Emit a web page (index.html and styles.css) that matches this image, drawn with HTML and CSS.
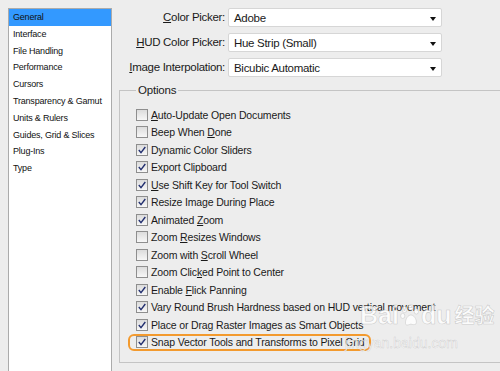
FILE: index.html
```html
<!DOCTYPE html>
<html lang="en">
<head>
    <meta charset="UTF-8">
    <title>Preferences - General</title>
    <link rel="stylesheet" href="styles.css">
</head>
<body>

    <div class="dialog">
        <ul class="nav">
            <li class="active">General</li>
            <li>Interface</li>
            <li>File Handling</li>
            <li>Performance</li>
            <li>Cursors</li>
            <li>Transparency &amp; Gamut</li>
            <li>Units &amp; Rulers</li>
            <li>Guides, Grid &amp; Slices</li>
            <li>Plug-Ins</li>
            <li>Type</li>
        </ul>

        <div class="panel">
            <div class="pickers">
                <label><u>C</u>olor Picker:</label>
                <div class="select">Adobe<span class="arrow"></span></div>
                <label><u>H</u>UD Color Picker:</label>
                <div class="select">Hue Strip (Small)<span class="arrow"></span></div>
                <label><u>I</u>mage Interpolation:</label>
                <div class="select">Bicubic Automatic<span class="arrow"></span></div>
            </div>

            <fieldset class="options">
                <legend>Options</legend>
                <ul class="checks">
                    <li class="check"><span class="box"></span><span><u>A</u>uto-Update Open Documents</span></li>
                    <li class="check"><span class="box"></span><span>Beep When <u>D</u>one</span></li>
                    <li class="check on"><span class="box"></span><span>Dynamic Color Sliders</span></li>
                    <li class="check on"><span class="box"></span><span>Export Clipboard</span></li>
                    <li class="check on"><span class="box"></span><span><u>U</u>se Shift Key for Tool Switch</span></li>
                    <li class="check on"><span class="box"></span><span>Resize Image During Place</span></li>
                    <li class="check on"><span class="box"></span><span>Animated <u>Z</u>oom</span></li>
                    <li class="check"><span class="box"></span><span>Zoom <u>R</u>esizes Windows</span></li>
                    <li class="check"><span class="box"></span><span>Zoom with <u>S</u>croll Wheel</span></li>
                    <li class="check"><span class="box"></span><span>Zoom Clic<u>k</u>ed Point to Center</span></li>
                    <li class="check on"><span class="box"></span><span>Enable <u>F</u>lick Panning</span></li>
                    <li class="check on"><span class="box"></span><span>Vary Round Brush Hardness based on HUD vertical movement</span></li>
                    <li class="check on"><span class="box"></span><span>Place or Drag Raster Images as Smart Objects</span></li>
                    <li class="check on marked"><span class="box"></span><span>Snap Vector Tools and Transforms to Pixel Grid</span></li>
                </ul>
            </fieldset>
        </div>
    </div>

    <!-- watermark from the original screenshot -->
    <div class="watermark">
        <div class="logo">Bai<svg width="20" height="22" viewBox="0 0 22 24"><ellipse cx="5" cy="6" rx="2.6" ry="3.4"/><ellipse cx="12" cy="3.5" rx="2.6" ry="3.2"/><ellipse cx="18" cy="8" rx="2.4" ry="3"/><ellipse cx="3" cy="13" rx="2.3" ry="2.8"/><path d="M6 21c0-5 3-9 6-9s6 4 6 8c0 3-3 3-6 2c-3 1-6 2-6-1z"/></svg>du<span class="cn">经验</span></div>
        <div class="url">jingyan.baidu.com</div>
    </div>

</body>
</html>
```

FILE: styles.css
```css
body {
    margin: 0;
    background: #ededed;
    font-family: 'Liberation Sans', Arial, sans-serif;
    font-size: 11px;
    color: #1a1a1a;
    overflow: hidden;
}

.dialog {
    display: flex;
    height: 371px;
}

/* left category list */
.nav {
    list-style: none;
    margin: 8px 0 0 8px;
    padding: 0;
    width: 102px;
    flex: none;
    background: #fff;
    border: 1px solid #ababab;
    border-bottom: none;
}

.nav li {
    height: 16.8px;
    line-height: 16.8px;
    padding-left: 4px;
    font-size: 9px;
    letter-spacing: -0.2px;
    color: #111;
}

.nav li.active {
    background: #3399ff;
}

.panel {
    flex: 1;
    min-width: 0;
    padding-left: 7px;
    display: flex;
    flex-direction: column;
}

/* color picker rows */
.pickers {
    display: grid;
    grid-template-columns: 106px 214px;
    column-gap: 3px;
    row-gap: 6px;
    padding-top: 8px;
}

.pickers label {
    text-align: right;
    line-height: 19px;
    font-size: 11.5px;
    letter-spacing: -0.3px;
    white-space: nowrap;
}

.select {
    height: 19px;
    box-sizing: border-box;
    background: #fff;
    border: 1px solid #d6d6d6;
    border-radius: 2px;
    display: flex;
    align-items: center;
    justify-content: space-between;
    padding: 0 5px;
    font-size: 11.5px;
    letter-spacing: -0.3px;
}

.arrow {
    width: 0;
    height: 0;
    border-left: 3.5px solid transparent;
    border-right: 3.5px solid transparent;
    border-top: 4px solid #111;
    margin-top: 2px;
}

/* options group */
.options {
    margin: 6px 0 8px 0;
    padding: 0 0 0 16px;
    flex: 1;
    border: 1px solid #c4c4c4;
    border-right: none;
    min-width: 0;
}

.options legend {
    padding: 0 2px;
    line-height: 14px;
    font-size: 11.5px;
    letter-spacing: -0.2px;
}

.checks {
    list-style: none;
    margin: 0;
    padding: 9px 0 0 0;
}

.check {
    display: flex;
    align-items: center;
    gap: 3px;
    height: 17.5px;
    font-size: 10.5px;
    letter-spacing: -0.15px;
    white-space: nowrap;
}

.box {
    width: 12px;
    height: 12px;
    box-sizing: border-box;
    border: 1px solid #8e8e8e;
    background: linear-gradient(#dcdcdc, #f7f7f7);
    flex: none;
}

.check.on .box {
    background-image: url("data:image/svg+xml,%3Csvg xmlns='http://www.w3.org/2000/svg' width='10' height='10'%3E%3Cpath d='M1.8 5 L4 7.6 L8.3 2' fill='none' stroke='%23233070' stroke-width='1.4'/%3E%3C/svg%3E"),
        linear-gradient(#dcdcdc, #f7f7f7);
}

.check.marked {
    position: relative;
    width: max-content;
}

.check.marked::after {
    content: "";
    position: absolute;
    left: -8px;
    right: -6px;
    top: 0;
    bottom: 0;
    border: 2px solid #f39a2e;
    border-radius: 6px;
}

/* faint watermark */
.watermark {
    position: absolute;
    left: 345px;
    top: 300px;
    white-space: nowrap;
    color: rgba(255, 255, 255, 0.8);
    pointer-events: none;
}

.logo {
    margin-left: 15px;
    font-size: 25px;
    font-weight: bold;
    -webkit-text-stroke: 0.6px rgba(150, 150, 150, 0.45);
    display: flex;
    align-items: center;
    line-height: 30px;
}

.logo svg {
    fill: rgba(255, 255, 255, 0.8);
    stroke: rgba(150, 150, 150, 0.45);
    stroke-width: 0.6;
    margin: 0 1px;
}

.logo .cn {
    font-family: 'Noto Sans CJK SC', sans-serif;
    font-size: 20px;
    margin-left: 3px;
}

.url {
    font-size: 14px;
    -webkit-text-stroke: 0.5px rgba(150, 150, 150, 0.4);
    margin-top: 5px;
}
```
